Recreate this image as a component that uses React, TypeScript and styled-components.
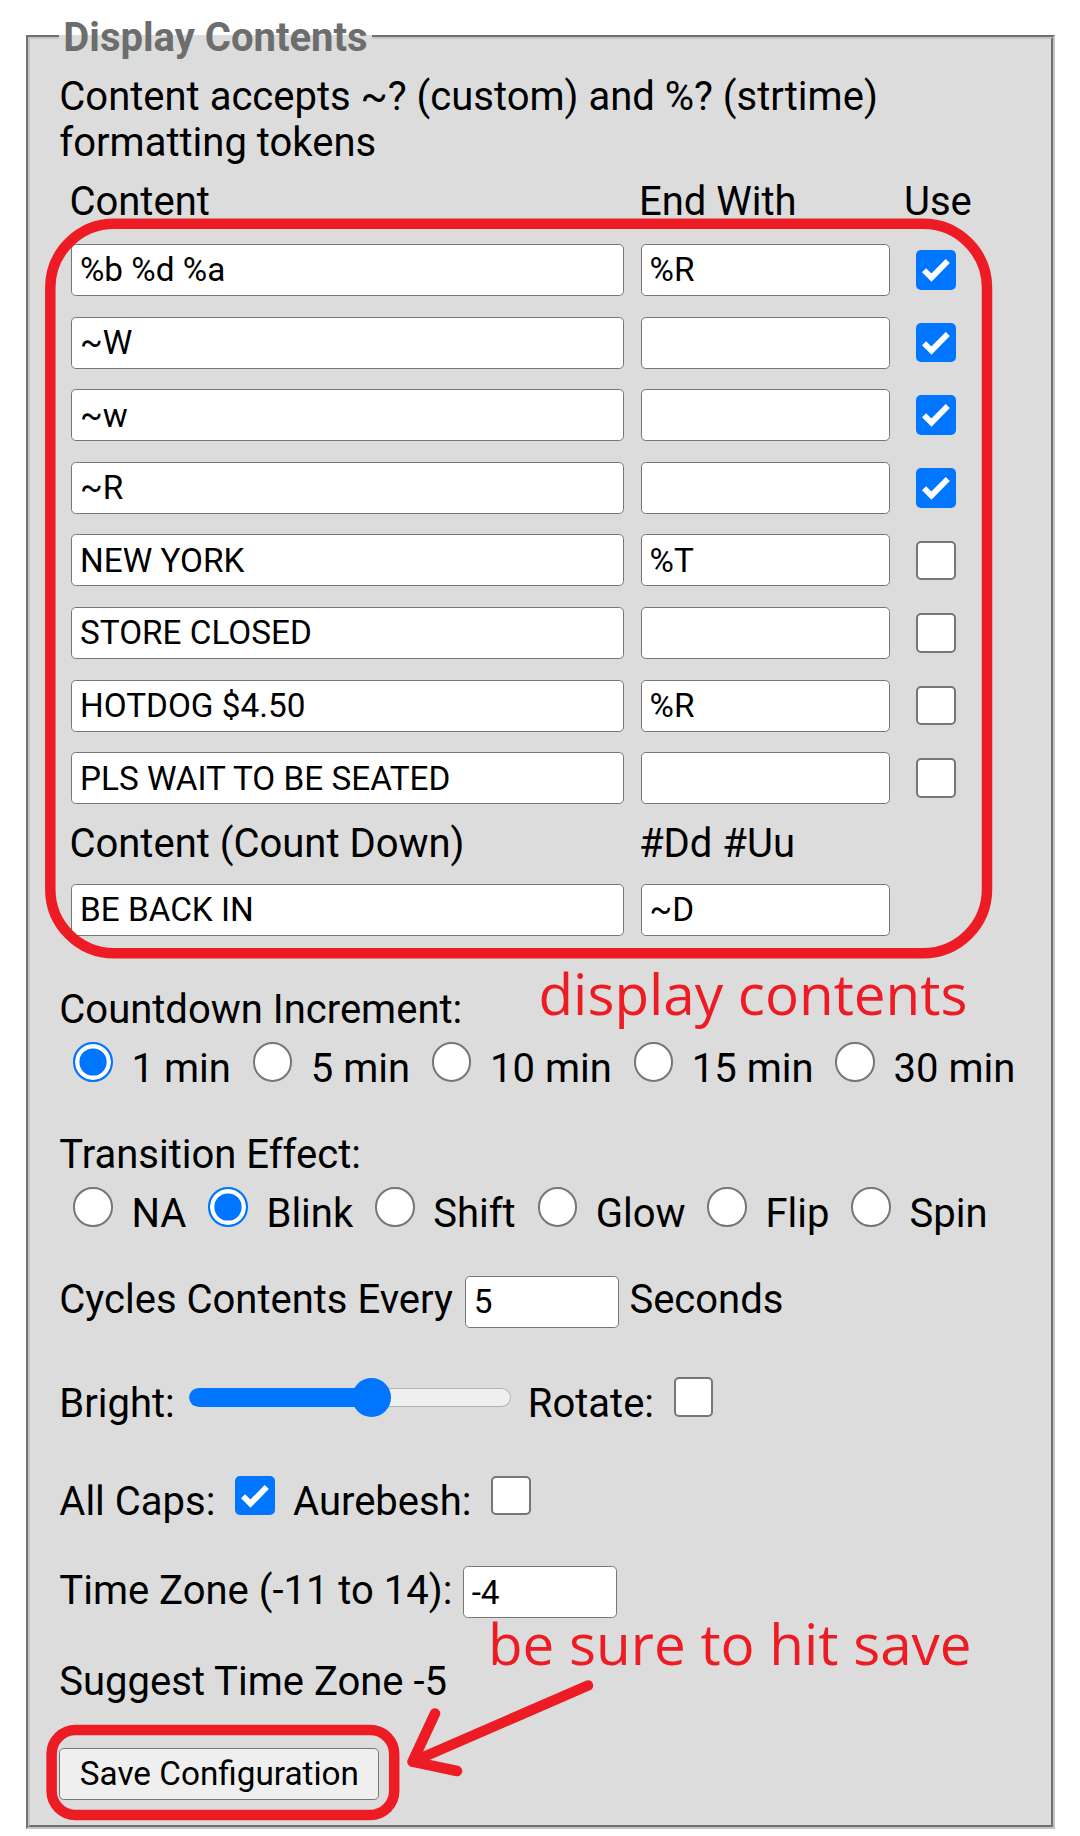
import React from 'react';
import styled, { createGlobalStyle } from 'styled-components';

const GlobalStyle = createGlobalStyle`
  html, body { margin: 0; padding: 0; background: #ffffff; }
  body {
    font-family: Roboto, "Liberation Sans", Arial, sans-serif;
    font-size: 40px;
    line-height: 45px;
    color: #000;
  }
`;

const Page = styled.div`
  position: relative;
  box-sizing: border-box;
  width: 1080px;
  height: 1836px;
  padding: 14.8px 0 0 25.8px;
  overflow: hidden;
`;

const Panel = styled.fieldset`
  box-sizing: border-box;
  width: 1029.2px;
  min-width: 0;
  margin: 0;
  padding: 14.2px 29.5px 25.3px;
  border: 4px groove #c4c4c4;
  background: #dcdcdc;
`;

const Legend = styled.legend`
  padding: 0 4px;
  font-weight: 700;
  line-height: 45px;
  color: #6d6d6d;
`;

const Body = styled.div`
  display: flex;
  flex-direction: column;
  align-items: flex-start;
`;

const Intro = styled.div`
  line-height: 46px;
`;

const Table = styled.div`
  display: flex;
  flex-direction: column;
  margin: 12.8px 0 0 10.1px;
  width: 952.2px;
`;

const Row = styled.div<{ $mt: number }>`
  display: grid;
  grid-template-columns: 569.6px 265px 1fr;
  align-items: center;
  margin-top: ${p => p.$mt}px;
`;

const HeadCell = styled.div`
  line-height: 45px;
  white-space: nowrap;
`;

const Field = styled.input<{ $w: number; $ml?: number; $mr?: number }>`
  box-sizing: border-box;
  width: ${p => p.$w}px;
  height: 52px;
  margin: 0 ${p => p.$mr ?? 0}px 0 ${p => p.$ml ?? 0}px;
  padding: 0 8px;
  border: 1px solid #767676;
  border-radius: 4.8px;
  background: #fff;
  font-family: Roboto, "Liberation Sans", Arial, sans-serif;
  font-size: 33.3px;
  color: #000;
  outline: none;
  flex: none;
`;

const Check = styled.span<{ $checked?: boolean; $ml?: number; $mr?: number }>`
  position: relative;
  display: block;
  flex: none;
  box-sizing: border-box;
  width: 39.6px;
  height: 39.6px;
  margin: 0 ${p => p.$mr ?? 0}px 0 ${p => p.$ml ?? 0}px;
  border-radius: 5px;
  border: ${p => (p.$checked ? 'none' : '2px solid #767676')};
  background: ${p => (p.$checked ? '#0075ff' : '#ffffff')};
`;

const Mark = styled.svg`
  position: absolute;
  inset: 0;
  width: 100%;
  height: 100%;
`;

const CheckBox = ({ checked, ml, mr }: { checked?: boolean; ml?: number; mr?: number }) => (
  <Check $checked={checked} $ml={ml} $mr={mr} role="checkbox" aria-checked={!!checked}>
    {checked && (
      <Mark viewBox="0 0 38.4 38.4">
        <path d="M7.8 19.6 L15 26.8 L30.8 10.6" fill="none" stroke="#fff" strokeWidth={5.6} />
      </Mark>
    )}
  </Check>
);

const Heading = styled.div<{ $mt: number }>`
  margin-top: ${p => p.$mt}px;
  line-height: 45px;
  white-space: nowrap;
`;

const Options = styled.div<{ $mt: number }>`
  display: flex;
  align-items: baseline;
  white-space: nowrap;
  margin-top: ${p => p.$mt}px;
`;

const Option = styled.label`
  display: flex;
  align-items: baseline;
  margin-right: 7.8px;
`;

const Radio = styled.span<{ $checked?: boolean }>`
  display: block;
  flex: none;
  box-sizing: border-box;
  width: 39.5px;
  height: 39.5px;
  margin: 0 18.6px 0 14.1px;
  border-radius: 50%;
  border: ${p => (p.$checked ? '2.5px solid #0075ff' : '2px solid #767676')};
  background: ${p => (p.$checked ? '#0075ff' : '#ffffff')};
  box-shadow: ${p => (p.$checked ? 'inset 0 0 0 4.4px #ffffff' : 'none')};
`;

const Line = styled.div<{ $mt: number }>`
  display: flex;
  align-items: baseline;
  white-space: nowrap;
  margin-top: ${p => p.$mt}px;
`;

const Slider = styled.div`
  position: relative;
  flex: none;
  width: 322px;
  height: 39px;
  margin: 0 16.6px 0 14.4px;
`;

const Track = styled.div`
  margin-top: 9.7px;
  height: 19.6px;
  border-radius: 9.8px;
  background: #efefef;
  box-shadow: inset 0 0 0 1px #b2b2b2;
  overflow: hidden;
`;

const Fill = styled.div`
  height: 100%;
  border-radius: 9.8px 0 0 9.8px;
  background: #0075ff;
`;

const Thumb = styled.div`
  position: absolute;
  top: 0;
  width: 39px;
  height: 39px;
  border-radius: 50%;
  background: #0075ff;
`;

const SaveButton = styled.button`
  margin-top: 43.2px;
  box-sizing: border-box;
  height: 52px;
  padding: 0 19.5px;
  border: 1px solid #767676;
  border-radius: 4.8px;
  background: #efefef;
  font-family: Roboto, "Liberation Sans", Arial, sans-serif;
  font-size: 33.3px;
  color: #000;
`;

const Overlay = styled.svg`
  position: absolute;
  left: 0;
  top: 0;
  width: 1080px;
  height: 1836px;
  pointer-events: none;
`;

const Caption = styled.div<{ $x: number; $y: number }>`
  position: absolute;
  left: ${p => p.$x}px;
  top: ${p => p.$y}px;
  font-family: "Open Sans", "Noto Sans", sans-serif;
  font-size: 56.6px;
  line-height: 1;
  color: #ed1c24;
  white-space: nowrap;
  pointer-events: none;
`;

const rows = [
  { content: '%b %d %a', end: '%R', use: true },
  { content: '~W', end: '', use: true },
  { content: '~w', end: '', use: true },
  { content: '~R', end: '', use: true },
  { content: 'NEW YORK', end: '%T', use: false },
  { content: 'STORE CLOSED', end: '', use: false },
  { content: 'HOTDOG $4.50', end: '%R', use: false },
  { content: 'PLS WAIT TO BE SEATED', end: '', use: false },
];

const increments = ['1 min', '5 min', '10 min', '15 min', '30 min'];
const effects = ['NA', 'Blink', 'Shift', 'Glow', 'Flip', 'Spin'];

export default function App() {
  const bright = 0.576;
  const trackW = 322;
  const thumbW = 39;
  const thumbLeft = bright * (trackW - thumbW);

  return (
    <>
      <GlobalStyle />
      <Page>
        <Panel>
          <Legend>Display Contents</Legend>
          <Body>
            <Intro>Content accepts ~? (custom) and %? (strtime) formatting tokens</Intro>
            <Table>
              <Row $mt={0}>
                <HeadCell>Content</HeadCell>
                <HeadCell>End With</HeadCell>
                <HeadCell>Use</HeadCell>
              </Row>
              {rows.map((r, i) => (
                <Row key={i} $mt={i === 0 ? 20.2 : 20.6}>
                  <Field $w={552.7} $ml={1.6} defaultValue={r.content} />
                  <Field $w={249.3} $ml={1.6} defaultValue={r.end} />
                  <CheckBox checked={r.use} ml={12} />
                </Row>
              ))}
              <Row $mt={16.6}>
                <HeadCell>Content (Count Down)</HeadCell>
                <HeadCell>#Dd #Uu</HeadCell>
              </Row>
              <Row $mt={18.2}>
                <Field $w={552.7} $ml={1.6} defaultValue="BE BACK IN" />
                <Field $w={249.3} $ml={1.6} defaultValue="~D" />
              </Row>
            </Table>

            <Heading $mt={50.8}>Countdown Increment:</Heading>
            <Options $mt={10.4}>
              {increments.map((t, i) => (
                <Option key={t}>
                  <Radio $checked={i === 0} />
                  {t}
                </Option>
              ))}
            </Options>

            <Heading $mt={41.3}>Transition Effect:</Heading>
            <Options $mt={10.4}>
              {effects.map((t, i) => (
                <Option key={t}>
                  <Radio $checked={i === 1} />
                  {t}
                </Option>
              ))}
            </Options>

            <Line $mt={39.85}>
              <span>Cycles Contents Every</span>
              <Field $w={154.6} $ml={12} $mr={10} defaultValue="5" />
              <span>Seconds</span>
            </Line>

            <Line $mt={49.75}>
              <span>Bright:</span>
              <Slider>
                <Track>
                  <Fill style={{ width: thumbLeft + thumbW / 2 }} />
                </Track>
                <Thumb style={{ left: thumbLeft }} />
              </Slider>
              <span>Rotate:</span>
              <CheckBox ml={19.6} />
            </Line>

            <Line $mt={49.9}>
              <span>All Caps:</span>
              <CheckBox checked ml={19.6} mr={18.5} />
              <span>Aurebesh:</span>
              <CheckBox ml={19.6} />
            </Line>

            <Line $mt={41.55}>
              <span>Time Zone (-11 to 14):</span>
              <Field $w={154} $ml={10.3} defaultValue="-4" />
            </Line>

            <Heading $mt={41.45}>Suggest Time Zone -5</Heading>

            <SaveButton type="button">Save Configuration</SaveButton>
          </Body>
        </Panel>

        <Overlay viewBox="0 0 1080 1836">
          <rect x={50.3} y={223.8} width={936.7} height={729.5} rx={64} fill="none" stroke="#ed1c24" strokeWidth={10.5} />
          <rect x={51.6} y={1730} width={342.6} height={85} rx={24} fill="none" stroke="#ed1c24" strokeWidth={10.5} />
          <path
            d="M588 1685.5 L412.5 1761.7 M435 1713.5 L412.5 1761.7 L457 1771"
            fill="none"
            stroke="#ed1c24"
            strokeWidth={10.5}
            strokeLinecap="round"
            strokeLinejoin="round"
          />
        </Overlay>
        <Caption $x={538.5} $y={965.7}>display contents</Caption>
        <Caption $x={488} $y={1615.7}>be sure to hit save</Caption>
      </Page>
    </>
  );
}
